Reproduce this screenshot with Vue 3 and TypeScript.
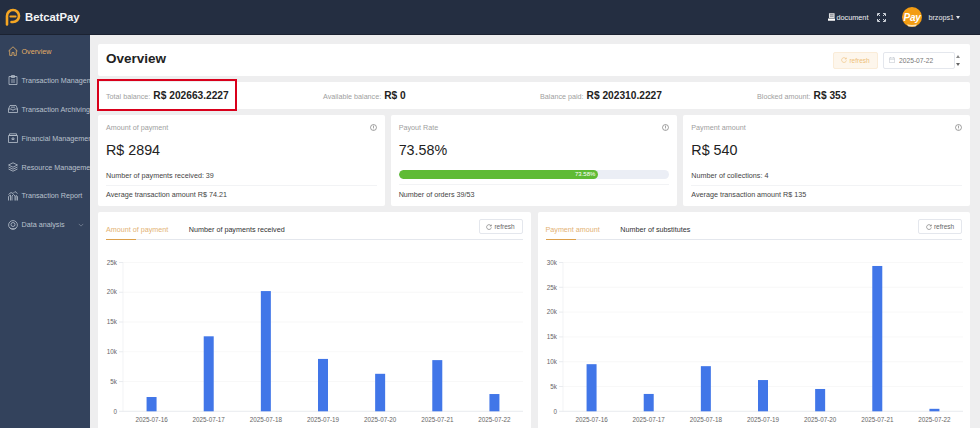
<script setup lang="ts">
interface Chart {
  tabs: [string, string]
  max: number
  step: number
  values: number[]
}

const dates = ['2025-07-16', '2025-07-17', '2025-07-18', '2025-07-19', '2025-07-20', '2025-07-21', '2025-07-22']
const plot = { left: 25, right: 425, top: 17.5, bottom: 166.3 }
const band = (plot.right - plot.left) / dates.length

const charts: Chart[] = [
  { tabs: ['Amount of payment', 'Number of payments received'], max: 25000, step: 5000, values: [2400, 12600, 20200, 8800, 6300, 8600, 2900] },
  { tabs: ['Payment amount', 'Number of substitutes'], max: 30000, step: 5000, values: [9500, 3500, 9100, 6300, 4500, 29300, 500] },
]

function ticks(c: Chart): { y: number; label: string }[] {
  const out: { y: number; label: string }[] = []
  for (let v = 0; v <= c.max; v += c.step) {
    out.push({ y: plot.bottom - (v / c.max) * (plot.bottom - plot.top), label: v === 0 ? '0' : `${v / 1000}k` })
  }
  return out
}
function barH(c: Chart, v: number): number {
  return (v / c.max) * (plot.bottom - plot.top)
}
function cx(i: number): number {
  return plot.left + band * (i + 0.5)
}

const menu = [
  { label: 'Overview', icon: 'home', active: true },
  { label: 'Transaction Management', icon: 'clip' },
  { label: 'Transaction Archiving', icon: 'archive' },
  { label: 'Financial Management', icon: 'box' },
  { label: 'Resource Management', icon: 'stack' },
  { label: 'Transaction Report', icon: 'report' },
  { label: 'Data analysis', icon: 'data', arrow: true },
]
const balances = [
  { label: 'Total balance:', value: 'R$ 202663.2227' },
  { label: 'Available balance:', value: 'R$ 0' },
  { label: 'Balance paid:', value: 'R$ 202310.2227' },
  { label: 'Blocked amount:', value: 'R$ 353' },
]
const stats = [
  { title: 'Amount of payment', value: 'R$ 2894', rows: ['Number of payments received: 39', 'Average transaction amount R$ 74.21'] },
  { title: 'Payout Rate', value: '73.58%', progress: 73.58, rows: ['Number of orders 39/53'] },
  { title: 'Payment amount', value: 'R$ 540', rows: ['Number of collections: 4', 'Average transaction amount R$ 135'] },
]
</script>

<template>
  <div class="app">
    <header class="topbar">
      <div class="brand">
        <svg class="logo" viewBox="0 0 16 18" width="16" height="18">
          <path d="M2 16.500V8a6 6 0 1 1 6 6H6.500" fill="none" stroke="#f5a623" stroke-width="2.600" stroke-linecap="round" />
          <path d="M5.400 8.600h5.200" fill="none" stroke="#f5a623" stroke-width="2" stroke-linecap="round" />
        </svg>
        <span>BetcatPay</span>
      </div>
      <div class="top-right">
        <span class="doc">
          <svg viewBox="0 0 8 8" width="7.500" height="8">
            <path d="M1 0h6v5H1z" fill="#e8e8e8" />
            <path d="M0 5.600h8V8H0z" fill="#fff" />
            <path d="M2 1.600h4M2 3.200h4" stroke="#242e41" stroke-width=".6" />
          </svg>
          document
        </span>
        <svg class="full" viewBox="0 0 9 9" width="9" height="9">
          <path d="M0.500 3V.5H3M6 .5h2.500V3M8.500 6v2.500H6M3 8.500H.5V6M1 1l2 2M8 1 6 3M8 8 6 6M1 8l2-2" fill="none" stroke="#dfe3ea" stroke-width=".9" />
        </svg>
        <svg class="avatar" viewBox="0 0 20 20" width="20" height="20">
          <circle cx="10" cy="10" r="10" fill="#f39c12" />
          <path d="M5 17.200c3 .9 7 .9 10 0l-1.500 2.200h-7z" fill="#fbe3b5" />
          <text x="10" y="13.500" text-anchor="middle" class="pay">Pay</text>
        </svg>
        <span class="user">brzops1</span>
        <i class="caret"></i>
      </div>
    </header>

    <div class="body">
      <aside class="sidebar">
        <div v-for="m in menu" :key="m.label" class="menu-item" :class="{ active: m.active }">
          <svg viewBox="0 0 10 10" width="10" height="10" fill="none" stroke="currentColor" stroke-width=".8">
            <template v-if="m.icon === 'home'">
              <path d="M.5 5 5 .8 9.500 5M1.700 4.200V9.400h2.300V6.600h2v2.800h2.300V4.200" />
            </template>
            <template v-else-if="m.icon === 'clip'">
              <path d="M1 1.500h8v8H1zM3.500.5h3v2h-3zM3 5h4M3 7h4" />
            </template>
            <template v-else-if="m.icon === 'archive'">
              <path d="M.5 5 2 1.500h6L9.500 5v3.500H.5zM.5 5h3l.5 1h2l.5-1h3M3 3.200h4" />
            </template>
            <template v-else-if="m.icon === 'box'">
              <path d="M.5 2.500h9v7h-9zM1.500.8h7v1.700h-7zM4 5h2v1.500H4z" />
            </template>
            <template v-else-if="m.icon === 'stack'">
              <path d="M5 .8 9.500 3 5 5.200.5 3zM.5 5 5 7.200 9.500 5M.5 7 5 9.200 9.500 7" />
            </template>
            <template v-else-if="m.icon === 'report'">
              <path d="M.5 9.500v-4l2-1.500v5.500M4 9.500V5l1.500-1.500L7 5v4.500M8 9.500V4.500l1.500 1v4M.5 3.500l2.500-2 2 1 2-2 2.500 2" />
            </template>
            <template v-else>
              <circle cx="5" cy="5" r="4.400" /><circle cx="5" cy="4.500" r="2" /><path d="M2 8c2 1 4 1 6 0" />
            </template>
          </svg>
          <span class="menu-label">{{ m.label }}</span>
          <svg v-if="m.arrow" class="menu-arrow" viewBox="0 0 8 5" width="6" height="4">
            <path d="M1 1l3 3 3-3" fill="none" stroke="currentColor" stroke-width=".8" />
          </svg>
        </div>
      </aside>

      <main class="main">
        <section class="card title-card">
          <h1>Overview</h1>
          <div class="title-tools">
            <button class="btn-warn">
              <svg viewBox="0 0 8 8" width="6" height="6" fill="none" stroke="currentColor" stroke-width=".8"><path d="M6.800 2.500A3.200 3.200 0 1 0 7.200 4.500M7 .8v1.900H5.100" /></svg>
              refresh
            </button>
            <div class="date">
              <svg viewBox="0 0 8 8" width="6" height="6" fill="none" stroke="#c0c4cc" stroke-width=".8">
                <path d="M.5 1.200h7v6.300h-7zM.5 3h7M2 0v1.500M6 0v1.500" />
              </svg>
              <span>2025-07-22</span>
            </div>
            <div class="stepper"><i class="up"></i><i class="down"></i></div>
          </div>
        </section>

        <section class="card balance-card">
          <div v-for="b in balances" :key="b.label" class="balance">
            <span class="b-label">{{ b.label }}</span>
            <strong>{{ b.value }}</strong>
          </div>
          <div class="highlight"></div>
        </section>

        <section class="stats">
          <div v-for="s in stats" :key="s.title" class="card stat">
            <div class="stat-head">
              <span>{{ s.title }}</span>
              <svg viewBox="0 0 8 8" width="7" height="7" fill="none" stroke="#666" stroke-width=".7">
                <circle cx="4" cy="4" r="3.400" /><path d="M4 1.800v2.700M4 5.300v.8" />
              </svg>
            </div>
            <div class="stat-value">{{ s.value }}</div>
            <div v-if="s.progress" class="track">
              <div class="fill" :style="{ width: s.progress + '%' }"><span>{{ s.progress }}%</span></div>
            </div>
            <div v-for="r in s.rows" :key="r" class="stat-row">{{ r }}</div>
          </div>
        </section>

        <section class="charts">
          <div v-for="c in charts" :key="c.tabs[0]" class="card chart-card">
            <div class="tabs">
              <span class="tab active">{{ c.tabs[0] }}</span>
              <span class="tab">{{ c.tabs[1] }}</span>
              <button class="btn-plain">
                <svg viewBox="0 0 8 8" width="6" height="6" fill="none" stroke="currentColor" stroke-width=".8"><path d="M6.800 2.500A3.200 3.200 0 1 0 7.200 4.500M7 .8v1.900H5.100" /></svg>
                refresh
              </button>
            </div>
            <svg class="plot" viewBox="0 0 432.500 183" width="432.500" height="183">
              <g v-for="t in ticks(c)" :key="t.label">
                <line :x1="plot.left" :x2="plot.right" :y1="t.y" :y2="t.y" :stroke="t.label === '0' ? '#e0e3e8' : '#f5f5f5'" stroke-width=".7" />
                <line :x1="plot.left - 4" :x2="plot.left" :y1="t.y" :y2="t.y" stroke="#e0e3e8" stroke-width=".7" />
                <text :x="plot.left - 6" :y="t.y + 2.200" text-anchor="end" class="axis">{{ t.label }}</text>
              </g>
              <line :x1="plot.left" :x2="plot.left" :y1="plot.top" :y2="plot.bottom" stroke="#eceef1" stroke-width=".7" />
              <g v-for="(v, i) in c.values" :key="dates[i]">
                <rect :x="cx(i) - 5" :y="plot.bottom - barH(c, v)" width="10" :height="barH(c, v)" fill="#4176e8" />
                <text :x="cx(i)" y="177" text-anchor="middle" class="axis">{{ dates[i] }}</text>
              </g>
            </svg>
          </div>
        </section>
      </main>
    </div>
  </div>
</template>

<style>
html, body { margin: 0; padding: 0; overflow: hidden; }
</style>

<style scoped>
.app {
  width: 980px;
  height: 428px;
  overflow: hidden;
  display: flex;
  flex-direction: column;
  font-family: "Liberation Sans", Arial, sans-serif;
  font-size: 7.2px;
  color: #303133;
  background: #eeeeef;
}
.topbar {
  height: 35px;
  flex: none;
  display: flex;
  align-items: center;
  justify-content: space-between;
  background: #242e41;
  color: #fff;
  box-sizing: border-box;
  border-bottom: 1px solid #1b2231;
}
.brand {
  display: flex;
  align-items: center;
  gap: 4px;
  padding-left: 5px;
  font-size: 11.300px;
  font-weight: 700;
  color: #f4f5f7;
}
.top-right {
  display: flex;
  align-items: center;
  padding-right: 20px;
}
.doc {
  display: flex;
  align-items: center;
  gap: 1px;
  font-size: 7.300px;
  color: #eef0f3;
}
.full { margin-left: 9px; }
.avatar { margin-left: 16px; }
.pay {
  font-family: "Liberation Sans", Arial, sans-serif;
  font-size: 10px;
  font-weight: 700;
  font-style: italic;
  fill: #fff;
  letter-spacing: -.3px;
}
.user { margin-left: 6px; color: #e6e8ec; font-size: 7.200px; }
.caret {
  margin-left: 2px;
  width: 0;
  height: 0;
  border-left: 2.500px solid transparent;
  border-right: 2.500px solid transparent;
  border-top: 3px solid #e6e8ec;
}
.body { flex: 1; display: flex; min-height: 0; }
.sidebar {
  width: 90px;
  flex: none;
  background: #33425c;
  padding-top: 2px;
  overflow: hidden;
  box-sizing: border-box;
}
.menu-item {
  height: 28.900px;
  display: flex;
  align-items: center;
  gap: 3.500px;
  padding-left: 8px;
  color: #b9c1cd;
  white-space: nowrap;
}
.menu-item.active { color: #e3ae66; }
.menu-item svg { flex: none; }
.menu-arrow { margin-left: 10px; opacity: .7; }
.main {
  flex: 1;
  min-width: 0;
  display: flex;
  flex-direction: column;
  gap: 6px;
  padding: 9px 10px 0 8px;
  overflow: hidden;
}
.card {
  background: #fff;
  border-radius: 2px;
  box-sizing: border-box;
}
.title-card {
  height: 32px;
  flex: none;
  display: flex;
  align-items: center;
  justify-content: space-between;
  padding: 0 18px 0 8px;
}
h1 { margin: 0 0 3px; font-size: 13.500px; font-weight: 700; color: #222; }
.title-tools { display: flex; align-items: center; }
.btn-warn {
  display: flex;
  align-items: center;
  justify-content: center;
  gap: 2px;
  width: 45px;
  height: 17px;
  padding: 0;
  font: inherit;
  font-size: 6.500px;
  color: #eec078;
  background: #fdf6ec;
  border: 1px solid #faecd8;
  border-radius: 2px;
}
.date {
  width: 72px;
  height: 17px;
  margin-left: 5px;
  box-sizing: border-box;
  border: 1px solid #e4e7ed;
  border-radius: 2px;
  display: flex;
  align-items: center;
  gap: 4px;
  padding-left: 5px;
  color: #777;
  font-size: 6.700px;
}
.stepper {
  width: 6px;
  height: 17px;
  margin-right: -9px;
  display: flex;
  flex-direction: column;
  justify-content: space-between;
  align-items: center;
  padding: 3px 0;
  box-sizing: border-box;
}
.stepper i { width: 0; height: 0; border-left: 2.500px solid transparent; border-right: 2.500px solid transparent; }
.stepper .up { border-bottom: 3.500px solid #888; }
.stepper .down { border-top: 3.500px solid #666; }
.balance-card {
  position: relative;
  height: 27px;
  flex: none;
  display: grid;
  grid-template-columns: repeat(3, 217px) 1fr;
  align-items: center;
  padding: 0 0 1px 8px;
}
.balance { display: flex; align-items: baseline; gap: 3px; white-space: nowrap; }
.b-label { color: #a0a0a0; font-size: 7.200px; }
.balance strong { font-size: 10.200px; color: #222; }
.highlight {
  position: absolute;
  left: -1px;
  top: -3px;
  width: 140px;
  height: 32px;
  box-sizing: border-box;
  border: 2px solid #d9001b;
}
.stats {
  flex: none;
  display: grid;
  grid-template-columns: repeat(3, 1fr);
  gap: 6px;
  height: 91px;
}
.stat { padding: 8px 8px 0; }
.stat-head {
  display: flex;
  justify-content: space-between;
  align-items: center;
  color: #a0a0a0;
  height: 8px;
}
.stat-value {
  font-size: 14.300px;
  color: #222;
  margin-top: 10px;
  height: 18px;
  line-height: 18px;
  margin-bottom: 8px;
}
.stat-row {
  height: 19px;
  line-height: 18px;
  color: #444;
  box-sizing: border-box;
  border-bottom: 1px solid #f2f3f5;
}
.stat-row:last-child { border-bottom: 0; }
.track {
  height: 9px;
  border-radius: 5px;
  background: #ebeef5;
  overflow: hidden;
  margin: 11px 0 5px;
}
.fill {
  height: 100%;
  border-radius: 5px;
  background: #5fbb35;
  color: #fff;
  font-size: 6px;
  text-align: right;
  line-height: 9px;
  padding-right: 2.500px;
  box-sizing: border-box;
}
.track + .stat-row { border-top: 1px solid #f2f3f5; height: 21px; line-height: 20px; border-bottom: 0; }
.charts {
  flex: none;
  display: grid;
  grid-template-columns: repeat(2, 1fr);
  gap: 7px;
}
.chart-card { height: 225px; }
.tabs {
  position: relative;
  height: 28px;
  margin: 0 8px;
  display: flex;
  align-items: flex-end;
  gap: 20.500px;
  box-sizing: border-box;
  border-bottom: 1px solid #e4e7ed;
}
.tab { padding-bottom: 5.500px; color: #303133; }
.tab.active { color: #e3b274; position: relative; }
.tab.active::after {
  content: "";
  position: absolute;
  left: 0;
  bottom: -1px;
  width: 30px;
  height: 1px;
  background: #dca04c;
}
.btn-plain {
  display: flex;
  align-items: center;
  justify-content: center;
  gap: 2px;
  position: absolute;
  right: 0;
  top: 7px;
  width: 44px;
  height: 15px;
  padding: 0;
  font: inherit;
  font-size: 6.500px;
  color: #666;
  background: #fff;
  border: 1px solid #e4e7ed;
  border-radius: 2px;
}
.plot { display: block; margin-top: 5px; }
.axis { font-size: 6.300px; fill: #666; font-family: "Liberation Sans", Arial, sans-serif; }
</style>
